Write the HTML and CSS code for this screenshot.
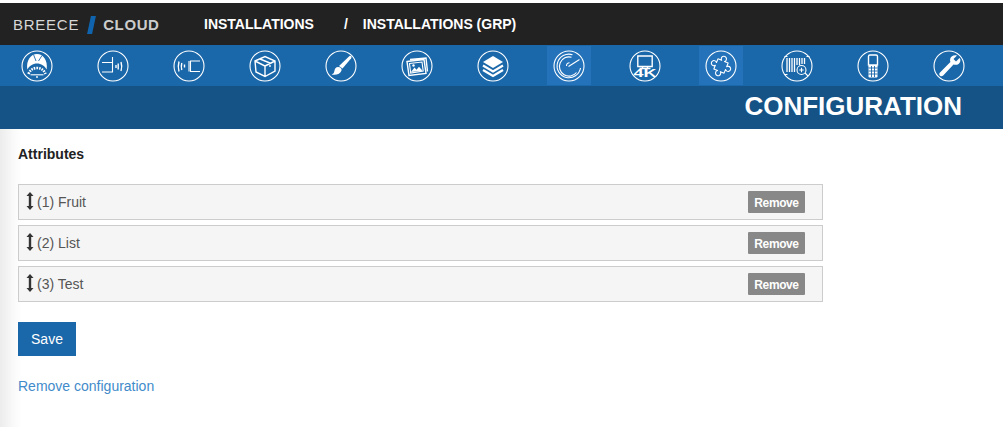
FILE: index.html
```html
<!DOCTYPE html>
<html lang="en">
<head>
<meta charset="utf-8">
<title>Configuration</title>
<link rel="stylesheet" href="styles.css">
</head>
<body>
<header class="topbar">
  <div class="logo"><span class="logo-a">BREECE</span><span class="logo-slash"></span><span class="logo-b">CLOUD</span></div>
  <nav class="crumbs"><a>INSTALLATIONS</a><span class="sep">/</span><a>INSTALLATIONS (GRP)</a></nav>
</header>
<nav class="iconbar">
  <a class="tile"><svg class="ico" viewBox="0 0 32 32"><circle class="ring" cx="16" cy="16" r="15"/><path class="fill" d="M6.300 19.500C5 10 10 4 16 4s11 6 9.700 15.500c-2-3.500-5.500-6-9.700-6s-7.700 2.500-9.700 6z"/><path class="cut" d="M12.500 4.500l2.500 6.500M21 5.500l-3.500 5.500"/><path class="dash" d="M7.500 24C9 20 12 18 16 18s7 2 8.500 6"/><path class="line" d="M9.500 24.800h13"/><circle class="fill" cx="16" cy="27" r=".9"/></svg></a>
  <a class="tile"><svg class="ico" viewBox="0 0 32 32"><circle class="ring" cx="16" cy="16" r="15"/><path class="line" d="M5 12.500h10M5 22h10M15.500 7v15.500"/><path class="line wide" d="M19 15v3M21.200 13.500v6M24 12c1 3 1 6 0 9"/></svg></a>
  <a class="tile"><svg class="ico" viewBox="0 0 32 32"><circle class="ring" cx="16" cy="16" r="15"/><path class="line" d="M27 11H17.500v10.500H27M16 11v10.500"/><path class="line wide" d="M11.500 14.500v3M8.800 13c-.7 2.500-.7 4.500 0 7M6 11.500c-1 3.500-1 6.500 0 10"/></svg></a>
  <a class="tile"><svg class="ico" viewBox="0 0 32 32"><circle class="ring" cx="16" cy="16" r="15"/><path class="line wide" d="M6 11l10-4.500L26 11v10l-10 5.500L7 22zM6 11l10 5v10.500M16 16l10-5M11 9l10 4v4"/></svg></a>
  <a class="tile"><svg class="ico" viewBox="0 0 32 32"><circle class="ring" cx="16" cy="16" r="15"/><path class="fill" d="M24.500 6c1.800-.6 2.500 1 1.700 2.200L17.500 18.500l-3.500-2.500z"/><path class="fill" d="M13 17c2.500 0 4 1.500 3.500 3.500C15.500 24 11 25.500 6.500 24.500 9 23.500 9 22.500 9.500 20.500 10 18.500 11 17 13 17z"/></svg></a>
  <a class="tile"><svg class="ico" viewBox="0 0 32 32"><circle class="ring" cx="16" cy="16" r="15"/><path class="line wide" d="M9 9.500l16-1.500 1.500 13.500M6 11.500l17-2 2 14-17 2z"/><path class="line" d="M8.500 13.500l12.500-1.500 1.200 9-12.500 2z"/><path class="fill" d="M10 22l3.500-4.500 2 2.200 2.500-3 3.500 4z"/><circle class="fill" cx="12.500" cy="15.500" r="1.200"/></svg></a>
  <a class="tile"><svg class="ico" viewBox="0 0 32 32"><circle class="ring" cx="16" cy="16" r="15"/><path class="fill" d="M16 6l10 6-10 6-10-6z"/><path class="wave" d="M6 15.500l10 6 10-6M6 20l10 6 10-6"/></svg></a>
  <a class="tile active"><svg class="ico" viewBox="0 0 32 32"><circle class="ring" cx="16" cy="16" r="15"/><path class="line" d="M27.500 18A11.800 11.800 0 1 1 19.500 4.700M23.500 22.500a9.600 9.600 0 1 1-5-15.300"/><path class="line" d="M13.500 16a3 3 0 0 1 3-3.200M15.500 16.500L26.500 9.500"/></svg></a>
  <a class="tile"><svg class="ico" viewBox="0 0 32 32"><circle class="ring" cx="16" cy="16" r="15"/><path class="line wide" d="M8.800 6h14.400v10.500H8.800zM13.500 16.500v2M18.500 16.500v2M10.500 18.500h11"/><text class="fourk" x="16" y="26.500" text-anchor="middle" textLength="23" lengthAdjust="spacingAndGlyphs">4K</text></svg></a>
  <a class="tile active"><svg class="ico" viewBox="0 0 32 32"><circle class="ring" cx="16" cy="16" r="15"/><path class="line round" transform="rotate(22 16 16) translate(16 16)" d="M-5.500-5.500H-1.500A2.600 2.600 0 1 1 1.500-5.500H5.500V-1.500A2.600 2.600 0 1 1 5.500 1.500V5.500H1.500A2.600 2.600 0 1 1-1.500 5.500H-5.500V1.500A2.600 2.600 0 1 1-5.500-1.500Z"/></svg></a>
  <a class="tile"><svg class="ico" viewBox="0 0 32 32"><circle class="ring" cx="16" cy="16" r="15"/><path class="line" d="M3.500 6.500h3M25.500 6.500h3M3.500 24.500h3"/><path class="bars" d="M6 8v14M8.500 8v14M11 8v14M13.500 8v14M16 8v7M18.500 8v7M21 8v6M23.500 8v6"/><circle class="line" cx="20.500" cy="20" r="4.500"/><path class="line" d="M18.300 20h4.400M20.500 17.800v4.400M24 23l3 3"/></svg></a>
  <a class="tile"><svg class="ico" viewBox="0 0 32 32"><circle class="ring" cx="16" cy="16" r="15"/><path class="line wide" d="M13 5h6c1 0 1.500.5 1.500 1.500V15h-9V6.500C11.500 5.500 12 5 13 5z"/><rect class="fill" x="11.500" y="15" width="9" height="12.500" rx="1.200"/><path class="cut" d="M11.500 18h9M11.500 21h9M11.500 24h9M14.500 16v11M17.500 16v11"/></svg></a>
  <a class="tile"><svg class="ico" viewBox="0 0 32 32"><circle class="ring" cx="16" cy="16" r="15"/><path class="fill" d="M26.500 8l-3.500 3.500-2.500-2.500L24 5.500c-3-1-6 .5-6.800 3.200-.3 1.100-.2 2.200.2 3.200L7 22.500c-1 1-1 2.300 0 3.200s2.200.8 3.200-.2l10.300-11c3 1 6.200-.3 6.800-3.300.2-1.200.2-2.400-.8-3.200z"/></svg></a>
</nav>
<div class="pagehead"><h1>CONFIGURATION</h1></div>
<main class="content">
  <h2>Attributes</h2>
  <ul class="rows">
    <li class="row"><span class="label"><svg class="grip" viewBox="0 0 8 18"><path d="M4 0L7.500 4H5.200v10H7.500L4 18 .5 14h2.300V4H.5z"/></svg>(1) Fruit</span><button class="remove">Remove</button></li>
    <li class="row"><span class="label"><svg class="grip" viewBox="0 0 8 18"><path d="M4 0L7.500 4H5.200v10H7.500L4 18 .5 14h2.300V4H.5z"/></svg>(2) List</span><button class="remove">Remove</button></li>
    <li class="row"><span class="label"><svg class="grip" viewBox="0 0 8 18"><path d="M4 0L7.500 4H5.200v10H7.500L4 18 .5 14h2.300V4H.5z"/></svg>(3) Test</span><button class="remove">Remove</button></li>
  </ul>
  <button class="save">Save</button>
  <a class="link">Remove configuration</a>
</main>
</body>
</html>
```
FILE: styles.css
```css
* { box-sizing: border-box; }
html, body { margin: 0; padding: 0; height: 100%; }
body {
  font-family: "Liberation Sans", Arial, sans-serif;
  background: #fff;
  color: #333;
  padding-top: 3px;
  overflow: hidden;
}
.topbar {
  height: 42px;
  background: #222;
  display: flex;
  align-items: center;
  padding-left: 13px;
}
.logo { display: flex; align-items: center; width: 191px; color: #d8d8d8; font-size: 15px; letter-spacing: .75px; margin-top: 1px; }
.logo-slash {
  width: 5px;
  height: 18px;
  margin: 0 9px 0 10px;
  background: #0f64ad;
  transform: skewX(-12deg);
}
.logo-b { font-weight: bold; color: #ccc; letter-spacing: .6px; }
.crumbs { display: flex; color: #fff; font-weight: bold; font-size: 14px; margin-top: -1px; }
.sep { margin: 0 15px 0 30px; }
.iconbar {
  height: 41px;
  background: #1a67a9;
  display: flex;
  gap: 32px;
  padding: 1px 0 1px 15px;
}
.tile { width: 44px; flex: none; display: flex; align-items: center; justify-content: center; }
.tile.active { background: #2372ba; }
.ico { width: 32px; height: 32px; display: block; }
.ring { fill: none; stroke: #fff; stroke-width: 1.1; }
.line { fill: none; stroke: #fff; stroke-width: 1.1; }
.wide { stroke-width: 1.4; }
.round { stroke-linejoin: round; }
.fill { fill: #fff; }
.cut { fill: none; stroke: #1a67a9; stroke-width: .9; }
.dash { fill: none; stroke: #fff; stroke-width: 2.6; stroke-dasharray: 1.6 1; }
.wave { fill: none; stroke: #fff; stroke-width: 2.2; }
.bars { fill: none; stroke: #fff; stroke-width: 1.3; }
.fourk { fill: #fff; font-family: "Liberation Sans", Arial, sans-serif; font-weight: bold; font-size: 10px; }
.pagehead {
  height: 43px;
  background: #155285;
  display: flex;
  align-items: center;
  justify-content: flex-end;
  padding-right: 41px;
}
h1 { margin: 0; font-size: 26px; line-height: 1; color: #fff; font-weight: bold; position: relative; top: -2px; }
.content {
  padding: 18px 180px 0 18px;
  height: 298px;
  background: linear-gradient(to right, #ececec 0, #fafafa 14px, #fff 22px);
}
h2 { margin: 0 0 21px; font-size: 14px; line-height: 15px; padding-bottom: 1px; font-weight: bold; color: #222; }
.rows { list-style: none; margin: 0 0 20px; padding: 0; display: flex; flex-direction: column; gap: 5px; }
.row {
  height: 36px;
  border: 1px solid #ccc;
  background: #f5f5f5;
  display: flex;
  align-items: center;
  justify-content: space-between;
  padding: 0 17px 0 7px;
}
.label { display: flex; align-items: center; font-size: 14px; color: #555; }
.grip { width: 8px; height: 18px; margin-right: 3px; fill: #333; position: relative; top: -1px; }
.remove {
  width: 57px;
  height: 22px;
  padding: 1px 0 0;
  border: 0;
  border-radius: 1px;
  background: #888;
  color: #fff;
  font: bold 12px "Liberation Sans", Arial, sans-serif;
  letter-spacing: -.4px;
}
.save {
  display: block;
  width: 58px;
  height: 34px;
  padding: 0;
  border: 0;
  background: #1a67a9;
  color: #fff;
  font: 14px "Liberation Sans", Arial, sans-serif;
  margin-bottom: 22px;
}
.link { display: block; color: #428bca; font-size: 14px; line-height: 16px; }
```
